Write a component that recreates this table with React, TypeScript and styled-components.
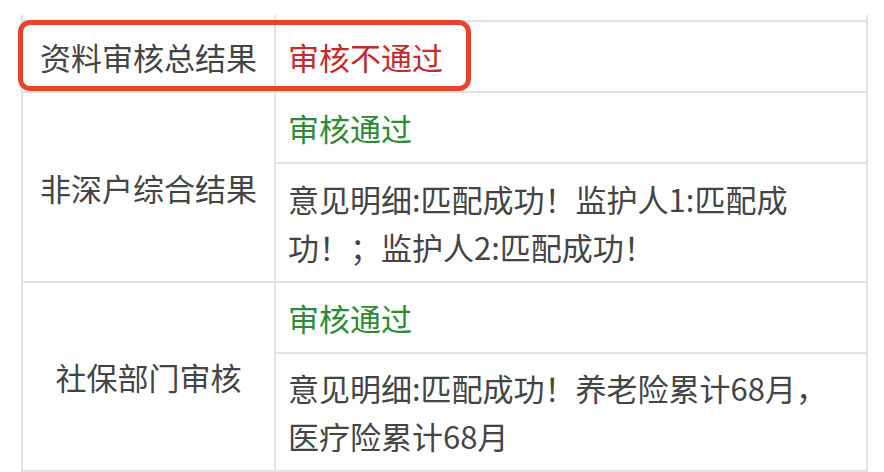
import React from "react";
import styled, { createGlobalStyle } from "styled-components";

const GlobalStyle = createGlobalStyle`
  html, body {
    margin: 0;
    padding: 0;
    background: #ffffff;
  }
  body {
    font-family: "Noto Sans CJK SC", "Noto Sans", sans-serif;
  }
`;

const LINE = "#e2e2e2";

const Page = styled.div`
  position: relative;
  padding: 15px 0 0 21px;
  width: 884px;
  height: 472px;
  box-sizing: border-box;
  overflow: hidden;
`;

const Grid = styled.div`
  display: grid;
  grid-template-columns: 253px 592px;
  border-left: 2px solid ${LINE};
  color: #444444;
  font-size: 31px;
`;

const Stub = styled.div`
  height: 7px;
  box-sizing: border-box;
  border-right: 2px solid ${LINE};
  border-bottom: 2px solid ${LINE};
`;

const Label = styled.div<{ $span?: number }>`
  grid-row: ${(p) => (p.$span ? `span ${p.$span}` : "auto")};
  display: flex;
  align-items: center;
  justify-content: center;
  box-sizing: border-box;
  border-right: 2px solid ${LINE};
  border-bottom: 2px solid ${LINE};
  white-space: nowrap;
`;

const Value = styled.div<{ $h: number; $tone?: "red" | "green" }>`
  height: ${(p) => p.$h}px;
  display: flex;
  align-items: center;
  box-sizing: border-box;
  padding: 0 28px 0 12px;
  border-right: 2px solid ${LINE};
  border-bottom: 2px solid ${LINE};
  line-height: 48px;
  color: ${(p) =>
    p.$tone === "red" ? "#c42b2b" : p.$tone === "green" ? "#2e8a36" : "#444444"};
`;

const Highlight = styled.div`
  position: absolute;
  left: 18px;
  top: 20px;
  width: 453px;
  height: 71px;
  box-sizing: border-box;
  border: 5px solid #e8432d;
  border-radius: 12px;
  pointer-events: none;
`;

export default function App() {
  return (
    <>
      <GlobalStyle />
      <Page>
        <Grid>
          <Stub />
          <Stub />
          <Label>资料审核总结果</Label>
          <Value $h={71} $tone="red">审核不通过</Value>
          <Label $span={2}>非深户综合结果</Label>
          <Value $h={71} $tone="green">审核通过</Value>
          <Value $h={119}>意见明细:匹配成功！监护人1:匹配成功！；监护人2:匹配成功！</Value>
          <Label $span={2}>社保部门审核</Label>
          <Value $h={71} $tone="green">审核通过</Value>
          <Value $h={118}>意见明细:匹配成功！养老险累计68月，医疗险累计68月</Value>
        </Grid>
        <Highlight />
      </Page>
    </>
  );
}
